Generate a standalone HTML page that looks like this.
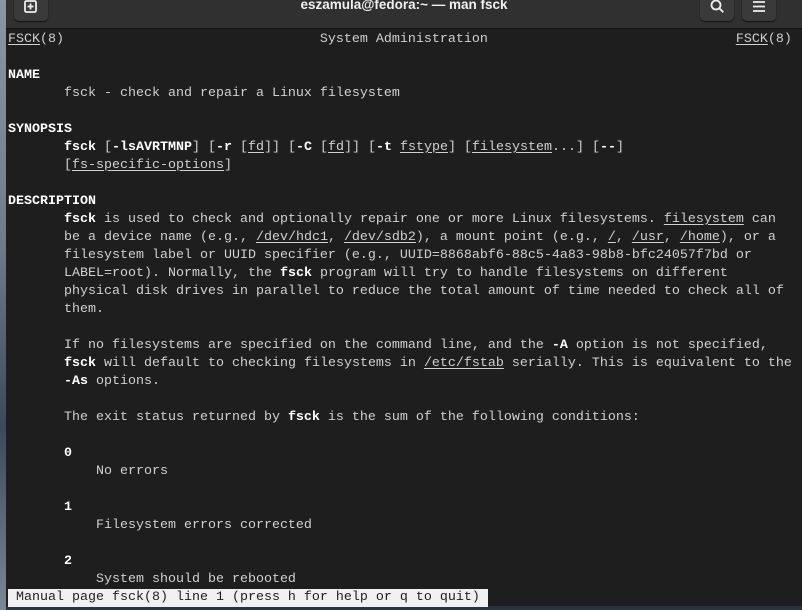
<!DOCTYPE html>
<html><head><meta charset="utf-8"><style>
html,body{margin:0;padding:0;width:802px;height:610px;overflow:hidden;background:#2a3340;}
.desk{position:absolute;left:0;top:0;width:6px;height:610px;background:linear-gradient(#8a97a3,#6f7c88 40%,#3b4a5a 70%,#7a8794);}
.win{position:absolute;left:6px;top:0;width:796px;height:606px;background:#1e1e1e;}
.hdr{position:absolute;left:0;top:0;width:796px;height:28px;background:#303030;border-bottom:1px solid #151515;}
.btn{position:absolute;top:-8px;width:34px;height:29px;background:#3a3a3a;border-radius:5px;box-shadow:0 1px 1px #111;}
.title{position:absolute;left:0;width:796px;top:-3px;text-align:center;color:#f0f0f0;font:bold 13.5px "Liberation Sans",sans-serif;}
pre{position:absolute;left:2px;top:31px;margin:0;font:13.33px/18px "Liberation Mono","DejaVu Sans Mono",monospace;color:#d0d0d0;}
b{color:#fff}
u{text-decoration:underline;text-underline-offset:2px}
.st{background:#f0f0f0;color:#1e1e1e;display:inline-block;width:480px;}
</style></head><body>
<div class="desk"></div>
<div class="win">
<div class="hdr">
<div class="btn" style="left:8px"><svg width="34" height="29" viewBox="0 0 34 29"><rect x="11" y="9" width="11" height="11" rx="1.5" fill="none" stroke="#eee" stroke-width="1.8"/><path d="M16.5 11.5v6M13.5 14.5h6" stroke="#eee" stroke-width="1.8"/></svg></div>
<div class="title">eszamula@fedora:~ — man fsck</div>
<div class="btn" style="left:694px"><svg width="34" height="29" viewBox="0 0 34 29"><circle cx="16" cy="13" r="4.5" fill="none" stroke="#eee" stroke-width="1.8"/><path d="M19.3 16.3l4 4" stroke="#eee" stroke-width="1.8"/></svg></div>
<div class="btn" style="left:736px"><svg width="34" height="29" viewBox="0 0 34 29"><path d="M11 10h12M11 14.5h12M11 19h12" stroke="#eee" stroke-width="1.8"/></svg></div>
</div>
<pre><u>FSCK</u>(8)                                System Administration                               <u>FSCK</u>(8)

<b>NAME</b>
       fsck - check and repair a Linux filesystem

<b>SYNOPSIS</b>
       <b>fsck</b> [<b>-lsAVRTMNP</b>] [<b>-r</b> [<u>fd</u>]] [<b>-C</b> [<u>fd</u>]] [<b>-t</b> <u>fstype</u>] [<u>filesystem</u>...] [<b>--</b>]
       [<u>fs-specific-options</u>]

<b>DESCRIPTION</b>
       <b>fsck</b> is used to check and optionally repair one or more Linux filesystems. <u>filesystem</u> can
       be a device name (e.g., <u>/dev/hdc1</u>, <u>/dev/sdb2</u>), a mount point (e.g., <u>/</u>, <u>/usr</u>, <u>/home</u>), or a
       filesystem label or UUID specifier (e.g., UUID=8868abf6-88c5-4a83-98b8-bfc24057f7bd or
       LABEL=root). Normally, the <b>fsck</b> program will try to handle filesystems on different
       physical disk drives in parallel to reduce the total amount of time needed to check all of
       them.

       If no filesystems are specified on the command line, and the <b>-A</b> option is not specified,
       <b>fsck</b> will default to checking filesystems in <u>/etc/fstab</u> serially. This is equivalent to the
       <b>-As</b> options.

       The exit status returned by <b>fsck</b> is the sum of the following conditions:

       <b>0</b>
           No errors

       <b>1</b>
           Filesystem errors corrected

       <b>2</b>
           System should be rebooted
<span class="st"> Manual page fsck(8) line 1 (press h for help or q to quit)</span></pre>
</div>
</body></html>
